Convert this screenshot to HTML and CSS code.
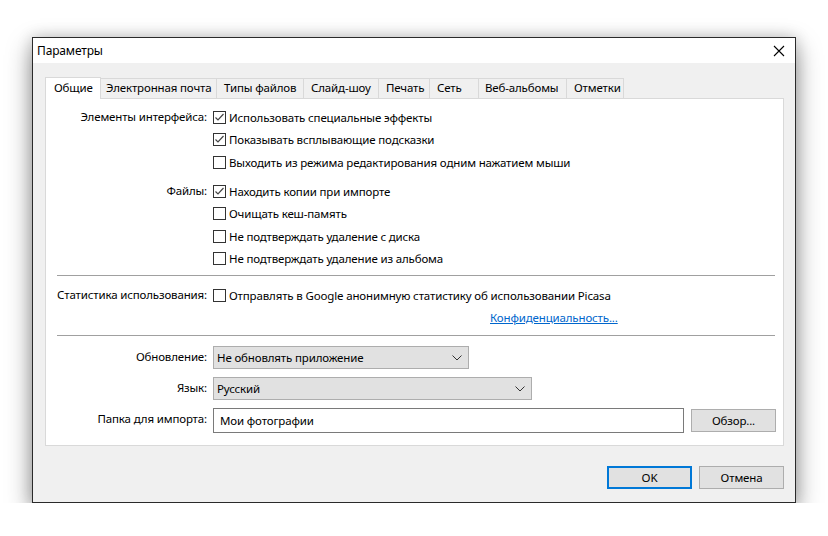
FILE: index.html
```html
<!DOCTYPE html>
<html lang="ru">
<head>
    <meta charset="UTF-8">
    <title>Параметры</title>
    <link rel="stylesheet" href="styles.css">
</head>
<body>
    <div class="window">
        <div class="titlebar">
            <span class="title">Параметры</span>
            <span class="close">
                <svg width="12" height="12" viewBox="0 0 12 12"><path d="M1 1 L11 11 M11 1 L1 11" stroke="#000" stroke-width="1.1" fill="none"/></svg>
            </span>
        </div>

        <div class="client">
            <div class="tabs">
                <div class="tab active tab-general">Общие</div>
                <div class="tab tab-mail">Электронная почта</div>
                <div class="tab tab-types">Типы файлов</div>
                <div class="tab tab-slides">Слайд-шоу</div>
                <div class="tab tab-print">Печать</div>
                <div class="tab tab-net">Сеть</div>
                <div class="tab tab-web">Веб-альбомы</div>
                <div class="tab tab-tags">Отметки</div>
            </div>

            <div class="panel">
                <div class="form-grid group-ui">
                    <div class="lbl">Элементы интерфейса:</div>
                    <div class="opts">
                        <label class="check on"><span class="box"><svg width="11" height="11" viewBox="0 0 11 11"><path d="M1.5 5.5 L4 8 L9.5 2" stroke="#444" stroke-width="1.2" fill="none"/></svg></span>Использовать специальные эффекты</label>
                        <label class="check on"><span class="box"><svg width="11" height="11" viewBox="0 0 11 11"><path d="M1.5 5.5 L4 8 L9.5 2" stroke="#444" stroke-width="1.2" fill="none"/></svg></span>Показывать всплывающие подсказки</label>
                        <label class="check"><span class="box"></span>Выходить из режима редактирования одним нажатием мыши</label>
                    </div>
                </div>

                <div class="form-grid group-files">
                    <div class="lbl">Файлы:</div>
                    <div class="opts">
                        <label class="check on"><span class="box"><svg width="11" height="11" viewBox="0 0 11 11"><path d="M1.5 5.5 L4 8 L9.5 2" stroke="#444" stroke-width="1.2" fill="none"/></svg></span>Находить копии при импорте</label>
                        <label class="check"><span class="box"></span>Очищать кеш-память</label>
                        <label class="check"><span class="box"></span>Не подтверждать удаление с диска</label>
                        <label class="check"><span class="box"></span>Не подтверждать удаление из альбома</label>
                    </div>
                </div>

                <div class="sep"></div>

                <div class="form-grid group-stats">
                    <div class="lbl">Статистика использования:</div>
                    <div class="opts">
                        <label class="check"><span class="box"></span>Отправлять в Google анонимную статистику об использовании Picasa</label>
                        <div class="link-row"><a href="#" class="link">Конфиденциальность...</a></div>
                    </div>
                </div>

                <div class="sep sep-2"></div>

                <div class="form-grid group-fields">
                    <div class="lbl">Обновление:</div>
                    <div class="field">
                        <div class="select select-update">
                            <span>Не обновлять приложение</span>
                            <svg width="10" height="6" viewBox="0 0 10 6"><path d="M0.5 0.5 L5 5 L9.5 0.5" stroke="#333" stroke-width="1" fill="none"/></svg>
                        </div>
                    </div>

                    <div class="lbl">Язык:</div>
                    <div class="field">
                        <div class="select select-lang">
                            <span>Русский</span>
                            <svg width="10" height="6" viewBox="0 0 10 6"><path d="M0.5 0.5 L5 5 L9.5 0.5" stroke="#333" stroke-width="1" fill="none"/></svg>
                        </div>
                    </div>

                    <div class="lbl">Папка для импорта:</div>
                    <div class="field field-folder">
                        <div class="input">Мои фотографии</div>
                        <button class="btn btn-browse">Обзор...</button>
                    </div>
                </div>
            </div>

            <div class="dialog-buttons">
                <button class="btn btn-default">OK</button>
                <button class="btn">Отмена</button>
            </div>
        </div>
    </div>
</body>
</html>
```

FILE: styles.css
```css
* {
    margin: 0;
    padding: 0;
    box-sizing: border-box;
}

body {
    background: #fff;
    font-family: 'Segoe UI', 'Noto Sans', sans-serif;
    font-size: 11.5px;
    letter-spacing: -0.15px;
    color: #000;
}

.window {
    width: 764px;
    height: 466px;
    margin: 37px 0 0 32px;
    border: 1px solid #2a2a2a;
    background: #f0f0f0;
    box-shadow: 0 10px 24px rgba(0, 0, 0, 0.4), 0 0 14px rgba(0, 0, 0, 0.18);
    display: flex;
    flex-direction: column;
}

.titlebar {
    height: 25px;
    background: #fff;
    display: flex;
    align-items: center;
    justify-content: space-between;
    padding: 0 10px 0 4px;
    font-size: 12px;
}

.close {
    display: flex;
    align-items: center;
}

.client {
    flex: 1;
    padding: 14px 11px 0 12px;
}

/* tabs */
.tabs {
    display: flex;
    align-items: flex-end;
    height: 21px;
}

.tab {
    height: 20px;
    line-height: 18px;
    padding-left: 6px;
    border: 1px solid #d9d9d9;
    border-bottom: none;
    margin-right: -1px;
    background: #f0f0f0;
    white-space: nowrap;
    overflow: hidden;
}

.tab.active {
    height: 22px;
    line-height: 20px;
    padding-left: 8px;
    background: #fff;
    position: relative;
    z-index: 1;
    margin-bottom: -1px;
}

.tab-general { width: 56px; }
.tab-mail { width: 117px; padding-left: 5px; }
.tab-types { width: 88px; padding-left: 7px; }
.tab-slides { width: 76px; padding-left: 7px; }
.tab-print { width: 52px; padding-left: 7px; }
.tab-net { width: 50px; padding-left: 7px; }
.tab-web { width: 89px; }
.tab-tags { width: 58px; padding-left: 7px; }

.panel {
    height: 348px;
    background: #fff;
    border: 1px solid #d9d9d9;
    padding-top: 7px;
}

/* form rows */
.form-grid {
    display: grid;
    grid-template-columns: 161px 1fr;
    column-gap: 6px;
}

.lbl {
    text-align: right;
    height: 22.5px;
    line-height: 22px;
    white-space: nowrap;
}

.opts {
    display: flex;
    flex-direction: column;
}

.check {
    display: flex;
    align-items: center;
    height: 22.5px;
    white-space: nowrap;
}

.box {
    width: 13px;
    height: 13px;
    border: 1px solid #333;
    background: #fff;
    margin-right: 3px;
    display: flex;
    align-items: center;
    justify-content: center;
}

.group-files {
    margin-top: 6.5px;
}

.sep {
    height: 1px;
    background: #a0a0a0;
    margin: 5px 8px 8px 11px;
}

.sep-2 {
    margin-top: 6px;
    margin-bottom: 10px;
}

.link-row {
    height: 22.5px;
    line-height: 22px;
    padding-left: 277px;
}

.link {
    color: #0066cc;
    text-decoration: underline;
}

.group-fields {
    row-gap: 8px;
}

.group-fields .lbl {
    height: 23px;
}

.field {
    display: flex;
    align-items: center;
}

.select {
    height: 23px;
    background: #e1e1e1;
    border: 1px solid #adadad;
    display: flex;
    align-items: center;
    justify-content: space-between;
    padding: 0 6px 0 3px;
}

.select-update {
    width: 256px;
}

.select-lang {
    width: 319px;
}

.field-folder .input {
    width: 471px;
    height: 25px;
    line-height: 23px;
    border: 1px solid #7a7a7a;
    background: #fff;
    padding-left: 6px;
}

.btn {
    font-family: inherit;
    font-size: 11.5px;
    letter-spacing: -0.15px;
    color: #000;
    width: 85px;
    height: 23px;
    background: #e1e1e1;
    border: 1px solid #adadad;
}

.btn-browse {
    margin-left: 7px;
}

.dialog-buttons {
    display: flex;
    justify-content: flex-end;
    gap: 7px;
    margin-top: 20px;
}

.btn-default {
    border: 2px solid #0078d7;
}
```
